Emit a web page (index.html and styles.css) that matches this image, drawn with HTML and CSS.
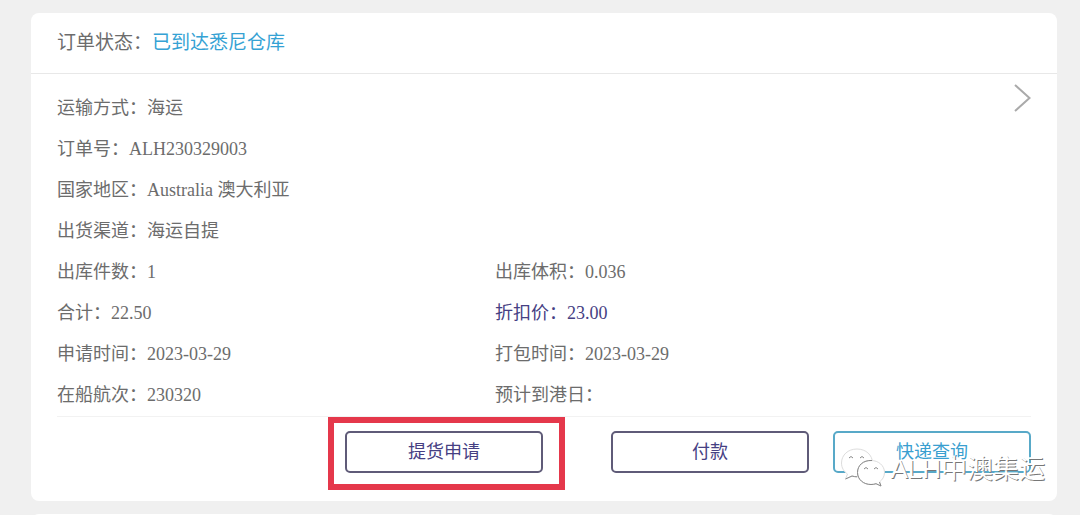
FILE: index.html
```html
<!DOCTYPE html>
<html lang="zh-CN">
<head>
<meta charset="utf-8">
<meta name="viewport" content="width=device-width, initial-scale=1">
<title>订单状态</title>
<link rel="stylesheet" href="styles.css">
</head>
<body>
<main class="orders">
  <article class="card">
    <header class="card-head">订单状态：<span class="status">已到达悉尼仓库</span></header>
    <div class="card-body">
      <dl class="details">
        <div class="row wide"><dt>运输方式：</dt><dd>海运</dd></div>
        <div class="row wide"><dt>订单号：</dt><dd>ALH230329003</dd></div>
        <div class="row wide"><dt>国家地区：</dt><dd>Australia 澳大利亚</dd></div>
        <div class="row wide"><dt>出货渠道：</dt><dd>海运自提</dd></div>
        <div class="row"><dt>出库件数：</dt><dd>1</dd></div>
        <div class="row"><dt>出库体积：</dt><dd>0.036</dd></div>
        <div class="row"><dt>合计：</dt><dd>22.50</dd></div>
        <div class="row discount"><dt>折扣价：</dt><dd>23.00</dd></div>
        <div class="row"><dt>申请时间：</dt><dd>2023-03-29</dd></div>
        <div class="row"><dt>打包时间：</dt><dd>2023-03-29</dd></div>
        <div class="row"><dt>在船航次：</dt><dd>230320</dd></div>
        <div class="row"><dt>预计到港日：</dt><dd></dd></div>
      </dl>
      <svg class="arrow" viewBox="0 0 18 30" aria-hidden="true"><path d="M2 2 16.500 15 2 28"/></svg>
    </div>
    <footer class="actions">
      <div class="highlight"><button class="btn" type="button">提货申请</button></div>
      <button class="btn" type="button">付款</button>
      <button class="btn btn-blue" type="button">快递查询</button>
      <div class="watermark">
        <svg class="wechat" viewBox="0 0 46 40" aria-hidden="true">
          <path class="bubble" d="M17 2C8 2 1.500 8 1.500 16c0 5 2.500 8.500 6 11l-2 5 6.500-3c2 .6 3.500.8 5 .8 9 0 15.500-6 15.500-13.800S26 2 17 2Z"/>
          <path class="shade" d="M5.500 32l6.500-3c2 .6 3.500.8 5 .8"/>
          <path class="eye" d="M9 11q2-3 4 0M20 11q2-3 4 0"/>
          <path class="bubble" d="M31 13.500c-7.500 0-13.500 5-13.500 12S23.500 37.500 31 37.500c2 0 3.500-.3 5-.8l5 2.300-1.500-4c3-2.300 5-5.500 5-9.500 0-7-6-12-13.500-12Z"/>
          <path class="shade" d="M32 13.500c-9-.5-14.500 5-14.500 12S23.500 37.500 31 37.500c2 0 3.500-.3 5-.8l5 2.300-1.500-4"/>
          <path class="eye" d="M24 22q2-3 4 0M34 22q2-3 4 0"/>
        </svg>
        <span>ALH中澳集运</span>
      </div>
    </footer>
  </article>
  <article class="card next-card"></article>
</main>
</body>
</html>
```
FILE: styles.css
```css
* {
  box-sizing: border-box;
}

body {
  margin: 0;
  background: #f0f0f0;
  color: #6c6c6c;
  font-family: "Liberation Serif", "Noto Sans CJK SC", serif;
  font-size: 18px;
  overflow: hidden;
}

.orders {
  display: flex;
  flex-direction: column;
  gap: 13px;
  padding: 13px 23px 0 31px;
}

.card {
  background: #fff;
  border-radius: 8px;
}

.card-head {
  padding: 0 26px;
  border-bottom: 1px solid #e8e8e8;
  font-size: 19px;
  line-height: 60px;
}

.status {
  color: #35a2d4;
}

.card-body {
  display: flex;
  align-items: flex-start;
  margin: 0 26px;
  padding-top: 14px;
  border-bottom: 1px solid #f2f2f2;
}

.details {
  display: grid;
  flex: 1;
  grid-template-columns: 46% 54%;
  margin: 0;
}

.row {
  display: flex;
  height: 41px;
  line-height: 41px;
}

.wide {
  grid-column: 1 / -1;
}

.row dd {
  margin: 0;
}

.discount {
  color: #464083;
}

.arrow {
  width: 18px;
  height: 30px;
  margin-left: 4px;
  margin-top: -5px;
  fill: none;
  stroke: #aaa;
  stroke-width: 2;
}

.actions {
  position: relative;
  display: flex;
  justify-content: flex-end;
  gap: 24px;
  padding: 14px 26px 28px;
}

.btn {
  width: 198px;
  height: 42px;
  padding: 0;
  border: 2px solid #5f5b78;
  border-radius: 5px;
  background: #fff;
  color: #464083;
  font: inherit;
  line-height: 36px;
}

.btn-blue {
  border-color: #58a9c8;
  color: #3a9fd0;
}

.highlight {
  position: relative;
  margin-right: 44px;
}

.highlight::after {
  content: "";
  position: absolute;
  inset: -14px -22px -17px -17px;
  border: 6px solid #e5384b;
}

.watermark {
  position: absolute;
  right: 12px;
  bottom: 14px;
  display: flex;
  align-items: center;
  gap: 4px;
  color: #fff;
  font-family: "Liberation Sans", "Noto Sans CJK SC", sans-serif;
  font-size: 26px;
  line-height: 36px;
  text-shadow: 1px 1px 0 #777;
}

.watermark span {
  padding-top: 4px;
}

.wechat {
  width: 46px;
  height: 40px;
}

.bubble {
  fill: #fff;
  stroke: #ddd;
}

.shade,
.eye {
  fill: none;
  stroke: #888;
}

.next-card {
  height: 20px;
}
```
